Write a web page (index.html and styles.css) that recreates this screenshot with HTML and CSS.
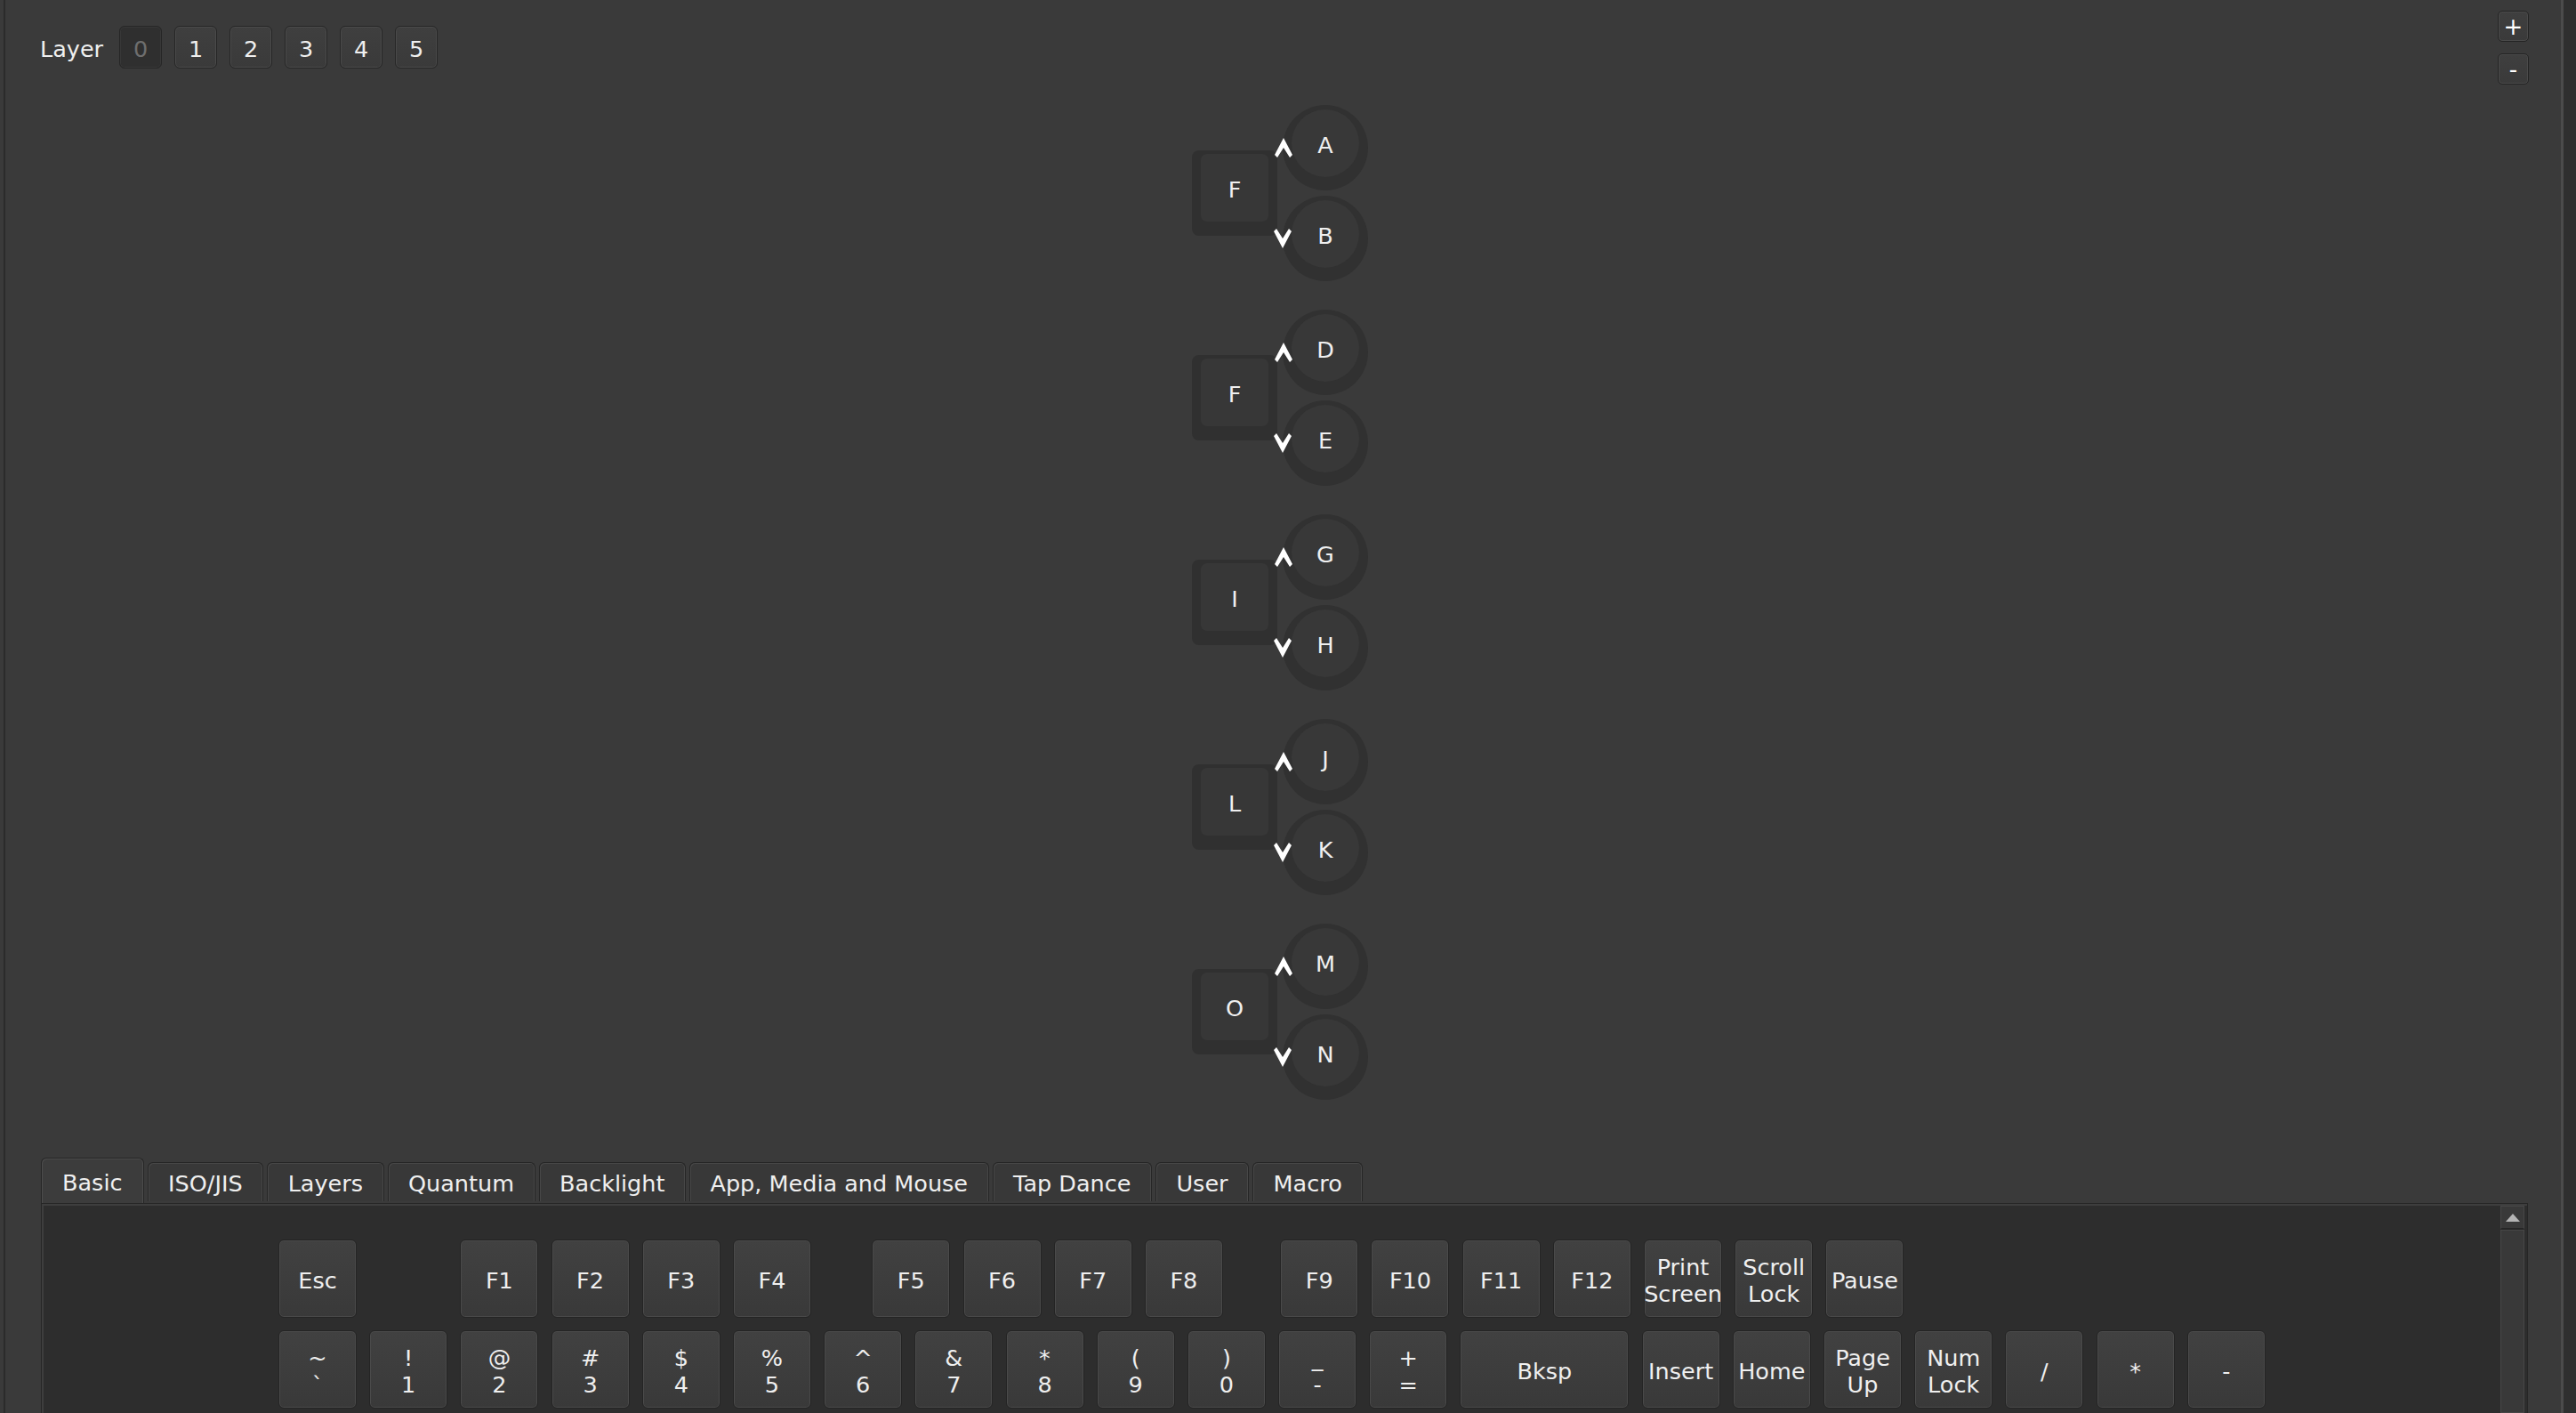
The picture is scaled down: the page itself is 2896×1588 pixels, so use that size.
FILE: index.html
```html
<!DOCTYPE html>
<html>
<head>
<meta charset="utf-8">
<link rel="stylesheet" href="styles.css">
</head>
<body>
<div class="app">
  <div class="edge-left"></div>
  <div class="main">
    <div class="topbar">
      <div class="layers">
        <span class="layer-label">Layer</span>
        <div class="lbtn current">0</div>
        <div class="lbtn">1</div>
        <div class="lbtn">2</div>
        <div class="lbtn">3</div>
        <div class="lbtn">4</div>
        <div class="lbtn">5</div>
      </div>
      <div class="zoomctl">
        <div class="zbtn">+</div>
        <div class="zbtn">-</div>
      </div>
    </div>

    <div class="canvas">
      <div class="enc-group">
        <div class="enc-key"><div class="cap">F</div></div>
        <div class="knobs">
          <div class="knob"><div class="knob-top">A</div></div>
          <div class="knob"><div class="knob-top">B</div></div>
        </div>
        <svg class="arrow up" viewBox="0 0 20 22"><polygon points="10,0 20,19 17,22 10,11 3,22 0,19"/></svg>
        <svg class="arrow down" viewBox="0 0 20 22"><polygon points="10,22 20,3 17,0 10,11 3,0 0,3"/></svg>
      </div>
      <div class="enc-group">
        <div class="enc-key"><div class="cap">F</div></div>
        <div class="knobs">
          <div class="knob"><div class="knob-top">D</div></div>
          <div class="knob"><div class="knob-top">E</div></div>
        </div>
        <svg class="arrow up" viewBox="0 0 20 22"><polygon points="10,0 20,19 17,22 10,11 3,22 0,19"/></svg>
        <svg class="arrow down" viewBox="0 0 20 22"><polygon points="10,22 20,3 17,0 10,11 3,0 0,3"/></svg>
      </div>
      <div class="enc-group">
        <div class="enc-key"><div class="cap">I</div></div>
        <div class="knobs">
          <div class="knob"><div class="knob-top">G</div></div>
          <div class="knob"><div class="knob-top">H</div></div>
        </div>
        <svg class="arrow up" viewBox="0 0 20 22"><polygon points="10,0 20,19 17,22 10,11 3,22 0,19"/></svg>
        <svg class="arrow down" viewBox="0 0 20 22"><polygon points="10,22 20,3 17,0 10,11 3,0 0,3"/></svg>
      </div>
      <div class="enc-group">
        <div class="enc-key"><div class="cap">L</div></div>
        <div class="knobs">
          <div class="knob"><div class="knob-top">J</div></div>
          <div class="knob"><div class="knob-top">K</div></div>
        </div>
        <svg class="arrow up" viewBox="0 0 20 22"><polygon points="10,0 20,19 17,22 10,11 3,22 0,19"/></svg>
        <svg class="arrow down" viewBox="0 0 20 22"><polygon points="10,22 20,3 17,0 10,11 3,0 0,3"/></svg>
      </div>
      <div class="enc-group">
        <div class="enc-key"><div class="cap">O</div></div>
        <div class="knobs">
          <div class="knob"><div class="knob-top">M</div></div>
          <div class="knob"><div class="knob-top">N</div></div>
        </div>
        <svg class="arrow up" viewBox="0 0 20 22"><polygon points="10,0 20,19 17,22 10,11 3,22 0,19"/></svg>
        <svg class="arrow down" viewBox="0 0 20 22"><polygon points="10,22 20,3 17,0 10,11 3,0 0,3"/></svg>
      </div>
    </div>

    <div class="tabs">
      <div class="tab active">Basic</div>
      <div class="tab">ISO/JIS</div>
      <div class="tab">Layers</div>
      <div class="tab">Quantum</div>
      <div class="tab">Backlight</div>
      <div class="tab">App, Media and Mouse</div>
      <div class="tab">Tap Dance</div>
      <div class="tab">User</div>
      <div class="tab">Macro</div>
    </div>

    <div class="panel">
      <div class="keys">
        <div class="krow">
          <div class="key">Esc</div>
          <div class="spacer-1u"></div>
          <div class="key">F1</div>
          <div class="key">F2</div>
          <div class="key">F3</div>
          <div class="key">F4</div>
          <div class="spacer-half wide"></div>
          <div class="key">F5</div>
          <div class="key">F6</div>
          <div class="key">F7</div>
          <div class="key">F8</div>
          <div class="spacer-half"></div>
          <div class="key">F9</div>
          <div class="key">F10</div>
          <div class="key">F11</div>
          <div class="key">F12</div>
          <div class="key">Print<br>Screen</div>
          <div class="key">Scroll<br>Lock</div>
          <div class="key">Pause</div>
        </div>
        <div class="krow">
          <div class="key">~<br>`</div>
          <div class="key">!<br>1</div>
          <div class="key">@<br>2</div>
          <div class="key">#<br>3</div>
          <div class="key">$<br>4</div>
          <div class="key">%<br>5</div>
          <div class="key">^<br>6</div>
          <div class="key">&amp;<br>7</div>
          <div class="key">*<br>8</div>
          <div class="key">(<br>9</div>
          <div class="key">)<br>0</div>
          <div class="key">_<br>-</div>
          <div class="key">+<br>=</div>
          <div class="key key-2u">Bksp</div>
          <div class="key">Insert</div>
          <div class="key">Home</div>
          <div class="key">Page<br>Up</div>
          <div class="key">Num<br>Lock</div>
          <div class="key">/</div>
          <div class="key">*</div>
          <div class="key">-</div>
        </div>
      </div>
      <div class="vscroll">
        <div class="vs-up"><div class="tri"></div></div>
        <div class="vs-track"></div>
      </div>
    </div>
  </div>
  <div class="side"></div>
</div>
</body>
</html>
```

FILE: styles.css
```css
html, body {
  margin: 0;
  padding: 0;
}
body {
  background: #2f2f2f;
  font-family: "DejaVu Sans", "Liberation Sans", sans-serif;
  font-size: 25.5px;
  color: #efefef;
}
.app {
  display: flex;
  width: 2896px;
  height: 1588px;
  overflow: hidden;
}
.edge-left {
  width: 4px;
  flex: none;
  background: #3a3a3a;
}
.main {
  flex: none;
  width: 2873px;
  height: 1588px;
  background: #3a3a3a;
  border-left: 2px solid #2b2b2b;
  border-right: 3px solid #4b4b4b;
  display: flex;
  flex-direction: column;
  overflow: hidden;
}
.side {
  flex: 1;
  background: #2f2f2f;
}

/* top bar */
.topbar {
  flex: none;
  height: 118px;
  display: flex;
  justify-content: space-between;
  align-items: flex-start;
}
.layers {
  margin-top: 29px;
  margin-left: 39px;
  display: flex;
  align-items: center;
  gap: 14px;
}
.layer-label {
  margin-right: 4px;
  padding-top: 4px;
}
.lbtn {
  width: 48px;
  height: 48px;
  box-sizing: border-box;
  padding-top: 4px;
  border: 1px solid #262626;
  border-radius: 6px;
  background: linear-gradient(#3f3f3f, #3a3a3a);
  box-shadow: inset 0 0 0 1px #4a4a4a;
  display: flex;
  align-items: center;
  justify-content: center;
}
.lbtn.current {
  background: #2f2f2f;
  color: #6e6e6e;
  box-shadow: inset 0 0 0 1px #383838;
}
.zoomctl {
  margin-top: 12px;
  margin-right: 36px;
  display: flex;
  flex-direction: column;
  gap: 13px;
}
.zbtn {
  width: 35px;
  height: 35px;
  box-sizing: border-box;
  border: 1px solid #242424;
  border-radius: 5px;
  background: linear-gradient(#3f3f3f, #3a3a3a);
  box-shadow: inset 0 0 0 1px #4a4a4a;
  display: flex;
  align-items: center;
  justify-content: center;
  font-size: 26px;
  line-height: 1;
  color: #ffffff;
}

/* encoder canvas */
.canvas {
  flex: none;
  height: 1183px;
  padding-left: 1334px;
  display: flex;
  flex-direction: column;
  gap: 32px;
}
.enc-group {
  position: relative;
  width: 198px;
  height: 198px;
  display: flex;
  align-items: center;
  gap: 6px;
}
.enc-key {
  width: 96px;
  height: 96px;
  box-sizing: border-box;
  padding: 4px 10px 16px 10px;
  background: #303030;
  border-radius: 8px;
}
.cap {
  width: 76px;
  height: 76px;
  box-sizing: border-box;
  padding-top: 4px;
  border-radius: 7px;
  background: #373737;
  display: flex;
  align-items: center;
  justify-content: center;
}
.knobs {
  display: flex;
  flex-direction: column;
  gap: 6px;
}
.knob {
  width: 96px;
  height: 96px;
  box-sizing: border-box;
  padding: 5px 10px 15px 10px;
  border-radius: 50%;
  background: #313131;
}
.knob-top {
  width: 76px;
  height: 76px;
  box-sizing: border-box;
  padding-top: 4px;
  border-radius: 50%;
  background: #383838;
  display: flex;
  align-items: center;
  justify-content: center;
}
.arrow {
  position: absolute;
  width: 20px;
  height: 22px;
  fill: #ffffff;
}
.arrow.up {
  left: 93px;
  top: 37px;
}
.arrow.down {
  left: 92px;
  top: 139px;
}

/* tabs */
.tabs {
  flex: none;
  height: 51px;
  padding-left: 40px;
  display: flex;
  align-items: flex-start;
  gap: 4px;
}
.tab {
  margin-top: 5px;
  height: 44px;
  box-sizing: border-box;
  padding: 4px 22.5px 0 22.5px;
  border: 1px solid #262626;
  border-bottom: none;
  border-radius: 6px 6px 0 0;
  background: #383838;
  box-shadow: inset 1px 1px 0 #474747, inset -1px 0 0 #474747;
  line-height: 39px;
  white-space: nowrap;
}
.tab.active {
  margin-top: 0;
  height: 51px;
  line-height: 46px;
  padding: 4px 23px 0 23px;
  background: #3c3c3c;
  box-shadow: inset 1px 1px 0 #4c4c4c, inset -1px 0 0 #4c4c4c;
}

/* panel */
.panel {
  flex: 1;
  margin-left: 40px;
  width: 2796px;
  box-sizing: border-box;
  border: 1px solid #262626;
  border-bottom: none;
  background: #2d2d2d;
  box-shadow: inset 2px 2px 0 #3e3e3e;
  display: flex;
  overflow: hidden;
}
.keys {
  flex: 1;
  padding: 40px 0 0 266px;
  display: flex;
  flex-direction: column;
  gap: 14px;
}
.krow {
  display: flex;
  gap: 14.2px;
}
.spacer-1u {
  width: 88px;
  flex: none;
}
.spacer-half {
  width: 36px;
  flex: none;
}
.spacer-half.wide {
  width: 40px;
}
.key {
  flex: none;
  width: 88px;
  height: 88px;
  box-sizing: border-box;
  padding-top: 4px;
  border: 1px solid #242424;
  border-radius: 6px;
  background: linear-gradient(#414141, #393939);
  box-shadow: inset 0 0 0 1px #4a4a4a;
  display: flex;
  align-items: center;
  justify-content: center;
  text-align: center;
  line-height: 30px;
  white-space: nowrap;
}
.key-2u {
  width: 190px;
}
.vscroll {
  flex: none;
  width: 27px;
  margin: 2px 3px 0 0;
  display: flex;
  flex-direction: column;
}
.vs-up {
  height: 27px;
  box-sizing: border-box;
  border: 1px solid #474747;
  border-bottom: 2px solid #262626;
  background: #393939;
  display: flex;
  align-items: center;
  justify-content: center;
}
.tri {
  width: 0;
  height: 0;
  border-left: 8px solid transparent;
  border-right: 8px solid transparent;
  border-bottom: 9px solid #b4b4b4;
}
.vs-track {
  flex: 1;
  box-sizing: border-box;
  border: 1px solid #474747;
  background: #393939;
}
```
